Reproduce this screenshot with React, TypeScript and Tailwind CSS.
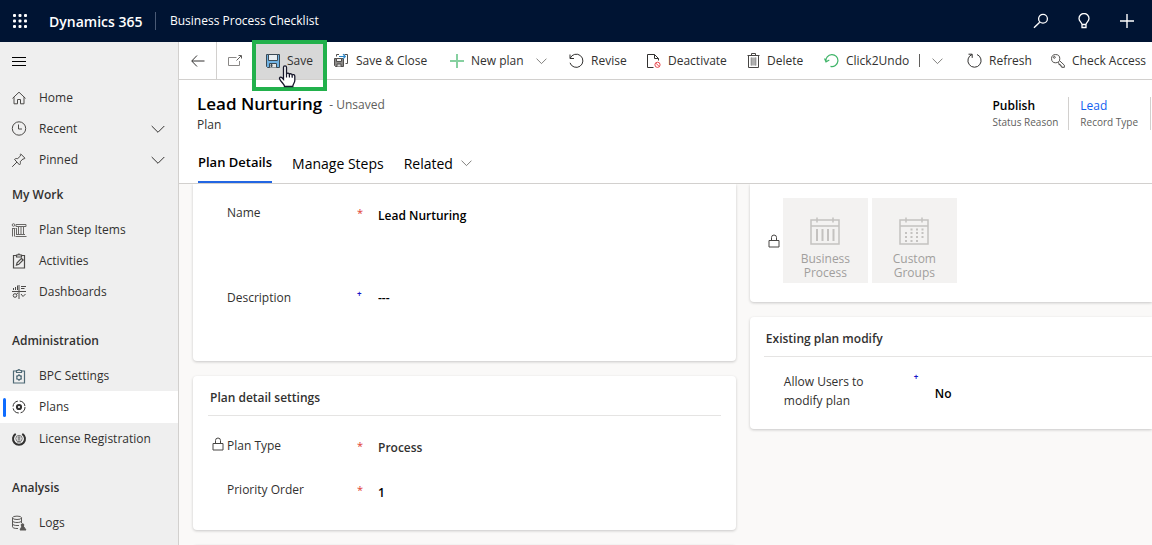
import React, { useState } from "react";

type IconProps = { children: React.ReactNode; className?: string; box?: string };

function Icon({ children, className = "size-4", box = "0 0 16 16" }: IconProps) {
  return (
    <svg viewBox={box} fill="none" stroke="currentColor" strokeWidth="1" aria-hidden="true" className={`shrink-0 ${className}`}>
      {children}
    </svg>
  );
}

const Chevron = ({ className = "h-3 w-[14px]" }: { className?: string }) => (
  <Icon box="0 0 14 12" className={className}>
    <path d="M.7 3 7 9.3 13.3 3" />
  </Icon>
);

const Lock = ({ className = "" }: { className?: string }) => (
  <Icon box="0 0 12 14" className={`h-[14px] w-3 text-[#484644] ${className}`}>
    <path d="M1 6.5h10v6.500H1zM3.500 6.500V3.500a2.500 2.500 0 0 1 5 0v3" />
  </Icon>
);

const navIcon = "size-4 text-[#4c4a48]";

const HomeIcon = () => (
  <Icon className={navIcon}>
    <path d="M1.500 8.400 8 2.200l6.500 6.200M3 7.200v6.600h3.500V9.500h3v4.300H13V7.200" />
  </Icon>
);
const ClockIcon = () => (
  <Icon className={navIcon}>
    <circle cx="8" cy="7.500" r="6.700" />
    <path d="M7.500 3.500v4.500H11" />
  </Icon>
);
const PinIcon = () => (
  <Icon className={navIcon}>
    <path d="m9.800 2 4.200 4.200-.8.800-1.200-.1-2.800 2.800c.5 1.400.1 2.500-.7 3.200L3.500 7.400c.8-.8 2-1.100 3.200-.8L9.500 3.900 9.200 2.600zM6 10l-4.800 4.800" />
  </Icon>
);
const StepItemsIcon = () => (
  <Icon className="size-4 text-[#6a6866]">
    <circle cx="2.500" cy="3" r="1.300" />
    <path d="M5 2.500h10v2H5zM1 6.500h3.500M1.500 6v8.500M3.500 6v8.500M7.500 5v7M10 5v7M12.500 5v7M6 12.500h8M4.500 14.500h11M5.500 6v7" />
  </Icon>
);
const ActivitiesIcon = () => (
  <Icon className={navIcon}>
    <path d="M5.500 2.500h-3v12.500h11V2.500h-3M5.500 4V2H7a1 1 0 0 1 2 0h1.500v2zM5.500 12l.6-2.300 4.400-4.300 1.600 1.600-4.300 4.300z" strokeWidth="1.200" />
  </Icon>
);
const DashboardIcon = () => (
  <Icon className={navIcon}>
    <path d="M1 7.500h14M8 1v14M2.500 6V4M4.500 6V3M6.500 6V1.500M10 2.500h5M10 4.500h3.500" />
    <circle cx="4" cy="11.500" r="1.800" />
    <path d="M5.500 10 7 9M10 10l2 2.500L14.500 10" />
  </Icon>
);
const SettingsIcon = () => (
  <Icon className="size-4 text-[#4f6a76]">
    <path d="M5.500 3h-3v12h11V3h-3M5.500 4.500v-2H7a1 1 0 0 1 2 0h1.500v2z" strokeWidth="1.200" />
    <circle cx="8" cy="9.500" r="2.200" strokeWidth="1.200" />
    <path d="M8 6v1.200M8 11.800V13M5 7.800l1 .6M10 10.600l1 .6M5 11.200l1-.6M10 8.400l1-.6" />
  </Icon>
);
const PlansIcon = () => (
  <Icon>
    <circle cx="8" cy="8" r="2.100" strokeWidth="2" />
    <circle cx="8" cy="8" r="6" strokeDasharray="7.500 1.925" />
  </Icon>
);
const LicenseIcon = () => (
  <Icon>
    <path d="M4.700 2.800a6 6 0 1 0 6.600 0" strokeWidth="2" />
    <circle cx="8" cy="7.500" r="3.200" stroke="#777" />
    <path d="M6.500 6.200h3M6.500 8h3M7 10v2M9 10v2M8 5v5" stroke="#777" />
  </Icon>
);
const LogsIcon = () => (
  <Icon className="size-4 text-[#5a5856]">
    <ellipse cx="6" cy="2.800" rx="4.500" ry="1.700" />
    <path d="M1.500 2.800v9c0 1 2 1.700 4.500 1.700h1M10.500 2.800V8M1.500 5.800c0 1 2 1.700 4.500 1.700s4.500-.7 4.500-1.700M1.500 8.800c0 1 2 1.700 4.500 1.700h2" />
    <path d="M11.500 10 9 15h6z" fill="currentColor" />
    <circle cx="11.500" cy="10" r="1.300" fill="currentColor" />
  </Icon>
);

type NavItem = { label: string; icon: React.ReactNode; expandable?: boolean };

const groups: { title?: string; items: NavItem[] }[] = [
  {
    items: [
      { label: "Home", icon: <HomeIcon /> },
      { label: "Recent", icon: <ClockIcon />, expandable: true },
      { label: "Pinned", icon: <PinIcon />, expandable: true },
    ],
  },
  {
    title: "My Work",
    items: [
      { label: "Plan Step Items", icon: <StepItemsIcon /> },
      { label: "Activities", icon: <ActivitiesIcon /> },
      { label: "Dashboards", icon: <DashboardIcon /> },
    ],
  },
  {
    title: "Administration",
    items: [
      { label: "BPC Settings", icon: <SettingsIcon /> },
      { label: "Plans", icon: <PlansIcon /> },
      { label: "License Registration", icon: <LicenseIcon /> },
    ],
  },
  { title: "Analysis", items: [{ label: "Logs", icon: <LogsIcon /> }] },
];

function Sidebar() {
  return (
    <nav aria-label="Site map" className="w-[179px] shrink-0 overflow-hidden border-r border-[#d2d0ce] bg-[#efefef] text-[#323130]">
      <button type="button" aria-label="Collapse site map" className="flex h-10 items-center px-3">
        <Icon className="h-3 w-[14px] text-black" box="0 0 14 12">
          <path d="M0 1.500h14M0 5.500h14M0 9.500h14" />
        </Icon>
      </button>
      <div className="flex flex-col gap-[14px]">
        {groups.map((group, i) => (
          <section key={group.title ?? "top"} className={i === 1 ? "-mt-[14px]" : ""}>
            {group.title && <h2 className="flex h-[39px] items-center px-3 font-semibold">{group.title}</h2>}
            <ul>
              {group.items.map((item) => {
                const active = item.label === "Plans";
                return (
                  <li key={item.label}>
                    <a
                      href="#"
                      aria-current={active ? "page" : undefined}
                      className={`relative flex items-center pr-[13px] pl-[11px] ${active ? "h-8 bg-white" : "h-[31px]"}`}
                    >
                      {active && <span className="absolute top-[7px] left-[3px] h-[19px] w-[3px] rounded-full bg-[#0f6cff]" />}
                      {item.icon}
                      <span className="ml-3 flex-1 whitespace-nowrap">{item.label}</span>
                      {item.expandable && <Chevron />}
                    </a>
                  </li>
                );
              })}
            </ul>
          </section>
        ))}
      </div>
    </nav>
  );
}

function Command({ label, icon, width }: { label: string; icon: React.ReactNode; width: string }) {
  return (
    <button type="button" className={`flex h-full shrink-0 items-center gap-[7px] whitespace-nowrap ${width}`}>
      {icon}
      {label}
    </button>
  );
}

function CommandBar() {
  return (
    <div role="toolbar" aria-label="Commands" className="flex h-[38px] shrink-0 items-center border-b border-[#d2d0ce] text-[#323130]">
      <button type="button" aria-label="Back" className="flex h-full w-[38px] shrink-0 items-center justify-center border-r border-[#d2d0ce]">
        <Icon className="size-[14px]" box="0 0 14 14">
          <path d="M13.500 7H1M6 1.500.7 7 6 12.500" />
        </Icon>
      </button>
      <button type="button" aria-label="Open in new window" className="flex h-full w-[39px] shrink-0 items-center pl-[10px]">
        <Icon className="size-4 text-[#8a8886]">
          <path d="M9.500 4.500h-8v8h11V8" />
          <path d="M9.500 7.500 14 3M11.500 2.500h3v3" stroke="#605e5c" />
        </Icon>
      </button>
      <div className="relative mr-[7px] h-full w-[67px] shrink-0">
        <button type="button" className="flex h-full w-full items-center gap-[7px] bg-[#d8d8d8] pl-[10px]">
          <Icon className="size-[14px] text-[#3b4a55]" box="0 0 14 14">
            <path d="M.5.500h13v13h-12l-1-1z" fill="#6fb1e2" />
            <path d="M2.500.500h9v6h-9z" fill="#e8eef2" />
            <path d="M3.500 13.500v-4h7v4" fill="#e4e4e4" />
            <path d="M5 10.500h1v2H5z" fill="currentColor" />
          </Icon>
          Save
        </button>
        <span className="pointer-events-none absolute -top-[2px] -right-1 -left-1 h-[51px] border-4 border-[#22b14c]" />
        <svg viewBox="0 0 18 24" aria-hidden="true" className="pointer-events-none absolute top-[23px] left-[22px] h-6 w-[18px]">
          <path
            d="M5.500 2.200C5.500.4 8.500.4 8.500 2.200v7c.3-1.400 2.700-1.300 2.900.3.500-1.200 2.600-.9 2.800.6.700-.9 2.600-.5 2.600 1.200v4.200c0 2.500-2 3.500-2 6H6.500c0-2-2.500-3.500-4.700-7.200-1-1.700.8-2.900 2.200-1.600l1.500 1.600z"
            fill="#fff"
            stroke="#16162a"
            strokeWidth="1.300"
          />
          <path d="M8.500 9v3.500M11.400 9.500v3M14.200 10.500v2.300" fill="none" stroke="#16162a" strokeWidth="1.200" />
        </svg>
      </div>
      <div className="flex h-full items-center pl-1">
        <Command
          label="Save & Close"
          width="w-[116px]"
          icon={
            <Icon className="size-[15px] text-[#504e4c]" box="0 0 15 15">
              <path d="M.5 5.500h9v8h-8l-1-1z" fill="#8a8886" />
              <path d="M2.500 5.500h5v3h-5z" fill="#eee" />
              <path d="M3 13.500v-2.500h4v2.500" fill="#ddd" />
              <path d="M2.500 3.500v-2H5M10.500 1.500h3v9h-2" />
              <path d="M5 3.500h6M9 1.200l2.300 2.300L9 5.800" stroke="#2b86c8" strokeWidth="1.200" />
            </Icon>
          }
        />
        <Command
          label="New plan"
          width="w-[86px]"
          icon={
            <Icon className="size-[14px] text-[#86d0a0]" box="0 0 14 14">
              <path d="M7 0v14M0 7h14" strokeWidth="2" />
            </Icon>
          }
        />
        <button type="button" aria-label="More new options" className="flex h-full w-[33px] shrink-0 items-center text-[#605e5c]">
          <Chevron className="h-3 w-[11px]" />
        </button>
        <Command
          label="Revise"
          width="w-[78px]"
          icon={
            <Icon className="size-[15px]" box="0 0 15 15">
              <path d="M1 1.500v4h4M1.200 5.200a6.600 6.600 0 1 1-.2 4.600" />
            </Icon>
          }
        />
        <Command
          label="Deactivate"
          width="w-[100px]"
          icon={
            <Icon className="size-[14px]" box="0 0 14 14">
              <path d="M6.500 13.500h-6V.500h7l4 4v2M7.500.500v4h4" />
              <circle cx="10.500" cy="10.800" r="2.600" stroke="#e8474d" />
              <path d="m8.800 9.100 3.400 3.400" stroke="#e8474d" />
            </Icon>
          }
        />
        <Command
          label="Delete"
          width="w-[77px]"
          icon={
            <Icon className="h-[15px] w-[13px] text-[#484644]" box="0 0 13 15">
              <path d="M.5 2.500h12M4.500 2.500v-2h4v2M1.500 2.500v12h10v-12" />
              <path d="M3.500 4.500h6v8h-6z" fill="#b0b0b0" stroke="none" />
              <path d="M4.500 4.500v8M8.500 4.500v8" stroke="#999" />
            </Icon>
          }
        />
        <Command
          label="Click2Undo"
          width="w-[95px]"
          icon={
            <Icon className="size-[15px] text-[#3fb468]" box="0 0 15 15">
              <path d="M.5 5.500 2 8.800 5.300 7M2 8.600A6 6 0 1 1 6.500 13.400" strokeWidth="1.200" />
            </Icon>
          }
        />
        <span className="h-[13px] w-px shrink-0 bg-[#605e5c]" />
        <button type="button" aria-label="More undo options" className="ml-3 flex h-full w-[35px] shrink-0 items-center text-[#605e5c]">
          <Chevron className="h-3 w-[11px]" />
        </button>
        <Command
          label="Refresh"
          width="w-[84px]"
          icon={
            <Icon className="size-[15px]" box="0 0 15 15">
              <path d="M1.500 1.200h3.700v3.700M5 1.500A6.600 6.600 0 1 0 10 1.500" />
            </Icon>
          }
        />
        <Command
          label="Check Access"
          width=""
          icon={
            <Icon className="size-[14px] text-[#484644]" box="0 0 15 15">
              <circle cx="5" cy="5" r="4.400" />
              <circle cx="3.600" cy="3.600" r="1" />
              <path d="m9 7 5.300 5v2.300h-2.800v-1.500H10v-1.500H8.500V9.800L7.300 8.800" />
            </Icon>
          }
        />
      </div>
    </div>
  );
}

function RecordHeader() {
  return (
    <header className="shrink-0 border-b border-[#d2d0ce] px-[18px] pr-px">
      <div className="flex items-start justify-between pt-3">
        <div>
          <div className="flex items-center gap-[7px]">
            <h1 className="text-[17px] leading-6 font-semibold text-black">Lead Nurturing</h1>
            <span className="pt-px text-[#605e5c]">- Unsaved</span>
          </div>
          <p className="leading-[18px]">Plan</p>
        </div>
        <dl className="mt-[5px] flex">
          <div className="flex flex-col-reverse border-r border-[#d2d0ce] pr-[10px]">
            <dt className="text-[10px] leading-4 text-[#605e5c]">Status Reason</dt>
            <dd className="leading-[17px] font-semibold text-black">Publish</dd>
          </div>
          <div className="flex flex-col-reverse border-r border-[#d2d0ce] pr-3 pl-[11px]">
            <dt className="text-[10px] leading-4 text-[#605e5c]">Record Type</dt>
            <dd className="leading-[17px] font-medium">
              <a href="#" className="text-[#1160f0]">Lead</a>
            </dd>
          </div>
        </dl>
      </div>
      <div role="tablist" className="mt-[15px] flex gap-5 pl-px text-[14px] text-black">
        <button type="button" role="tab" aria-selected="true" className="h-[34px] border-b-2 border-[#2266e3] pb-1 text-[13px] font-semibold">
          Plan Details
        </button>
        <button type="button" role="tab" aria-selected="false" className="h-[34px] pb-[6px]">
          Manage Steps
        </button>
        <button type="button" role="tab" aria-selected="false" className="flex h-[34px] items-center gap-2 pb-[6px]">
          Related
          <Chevron className="h-3 w-[11px] text-[#605e5c]" />
        </button>
      </div>
    </header>
  );
}

const cardShadow = "shadow-[0_1px_3px_rgba(0,0,0,0.2)]";
const value = "min-w-0 flex-1 appearance-none bg-transparent font-semibold text-black opacity-100 outline-none";

function Required() {
  return <span className="w-[21px] shrink-0 self-start text-[11px] leading-[18px] text-[#e03a2f]">*</span>;
}
function Recommended() {
  return <span className="w-[21px] shrink-0 self-start text-[8px] leading-[10px] font-bold text-[#1414c8]">+</span>;
}

function TileIcon({ dots = false }: { dots?: boolean }) {
  return (
    <svg viewBox="0 0 30 28" fill="none" stroke="#c4c2c0" strokeWidth="1.500" aria-hidden="true" className="h-7 w-[30px]">
      <path d="M1 3h28v24H1zM1 9h28M7 .5v5M23 .5v5" />
      {dots ? (
        <path d="M11.500 12.500h14M6 16h20M6 20h20M6 24h14" strokeWidth="2" strokeDasharray="2 3.500" />
      ) : (
        <path d="M7 12v12M12.500 12v12M18 12v12M23.500 12v12" strokeWidth="2" />
      )}
    </svg>
  );
}

function Tile({ first, second, dots }: { first: string; second: string; dots?: boolean }) {
  return (
    <button type="button" disabled className="flex size-[85px] flex-col items-center bg-[#f3f2f1] pt-[19px] leading-[14px] text-[#a19f9d]">
      <TileIcon dots={dots} />
      <span className="mt-[7px] text-center">
        {first}
        <br />
        {second}
      </span>
    </button>
  );
}

export default function App() {
  const [name, setName] = useState("Lead Nurturing");
  const [description, setDescription] = useState("---");
  const [order, setOrder] = useState("1");

  return (
    <div className="flex h-screen flex-col overflow-hidden bg-white font-['Open_Sans','Noto_Sans',sans-serif] text-[12px] text-[#323130]">
      <header className="flex h-[42px] shrink-0 items-center bg-[#001433] text-white">
        <button type="button" aria-label="App launcher" className="ml-3 flex size-4 items-center justify-center">
          <svg viewBox="0 0 14 14" fill="currentColor" aria-hidden="true" className="size-[14px]">
            {[0, 5.5, 11].map((y) => [0, 5.5, 11].map((x) => <rect key={`${x}-${y}`} x={x} y={y} width="3" height="3" rx="1" />))}
          </svg>
        </button>
        <a href="#" className="ml-[21px] w-[106px] text-[14px] font-semibold whitespace-nowrap">Dynamics 365</a>
        <span className="h-[18px] w-px bg-[#4a5a75]" />
        <a href="#" className="ml-[14px] whitespace-nowrap">Business Process Checklist</a>
        <div className="mr-[17px] ml-auto flex items-center gap-[27px]">
          <button type="button" aria-label="Search">
            <Icon>
              <circle cx="10" cy="5.700" r="4.400" strokeWidth="1.300" />
              <path d="M6.700 9.200 1 14.800" strokeWidth="1.400" />
            </Icon>
          </button>
          <button type="button" aria-label="Ideas">
            <Icon>
              <path d="M6 11.500c0-2-3-3-3-6a5 5 0 0 1 10 0c0 3-3 4-3 6zM6 11.500v3h4v-3" strokeWidth="1.300" />
            </Icon>
          </button>
          <button type="button" aria-label="Quick create">
            <Icon>
              <path d="M8 1v14M1 8h14" strokeWidth="1.400" />
            </Icon>
          </button>
        </div>
      </header>

      <div className="flex min-h-0 flex-1">
        <Sidebar />
        <div className="flex min-w-0 flex-1 flex-col">
          <CommandBar />
          <RecordHeader />
          <main className="grid min-h-0 flex-1 grid-cols-[27fr_20fr] items-start gap-[14px] overflow-hidden bg-[#faf9f8] pl-[14px]">
            <div className="flex min-w-0 flex-col gap-[15px]">
              <section className={`flex flex-col gap-[61px] rounded-b-[4px] bg-white pt-5 pr-4 pb-[48px] pl-[34px] ${cardShadow}`}>
                <div className="flex h-6 items-start">
                  <label htmlFor="name" className="w-[130px] shrink-0 leading-[18px]">Name</label>
                  <Required />
                  <input id="name" value={name} onChange={(e) => setName(e.target.value)} className={`${value} pt-[3px] leading-[18px]`} />
                </div>
                <div className="flex h-6 items-start">
                  <label htmlFor="description" className="w-[130px] shrink-0 leading-[18px]">Description</label>
                  <Recommended />
                  <input id="description" value={description} onChange={(e) => setDescription(e.target.value)} className={`${value} leading-[18px]`} />
                </div>
              </section>

              <section className={`rounded-[4px] bg-white px-[15px] pb-[25px] ${cardShadow}`}>
                <h2 className="h-10 border-b border-[#e5e4e3] px-[2px] pt-[13px] leading-[18px] font-semibold">Plan detail settings</h2>
                <div className="mt-[21px] flex flex-col gap-5 pl-1">
                  <div className="flex h-6 items-start">
                    <span className="w-[15px] shrink-0"><Lock /></span>
                    <label htmlFor="plan-type" className="w-[130px] shrink-0 leading-[18px]">Plan Type</label>
                    <Required />
                    <select id="plan-type" disabled className={`${value} pt-[2px] leading-[18px] text-[#323130]!`}>
                      <option>Process</option>
                    </select>
                  </div>
                  <div className="flex h-6 items-start pl-[15px]">
                    <label htmlFor="order" className="w-[130px] shrink-0 leading-[18px]">Priority Order</label>
                    <Required />
                    <input id="order" value={order} onChange={(e) => setOrder(e.target.value)} className={`${value} pt-[3px] leading-[18px]`} />
                  </div>
                </div>
              </section>

              <section className={`h-20 rounded-[4px] bg-white ${cardShadow}`} />
            </div>

            <div className="flex min-w-0 flex-col gap-[15px]">
              <section className={`flex items-center rounded-bl-[4px] bg-white pt-[14px] pb-[19px] pl-[18px] ${cardShadow}`}>
                <Lock className="mr-[3px]" />
                <div className="flex gap-1">
                  <Tile first="Business" second="Process" />
                  <Tile first="Custom" second="Groups" dots />
                </div>
              </section>

              <section className={`rounded-l-[4px] bg-white pb-[19px] pl-[14px] ${cardShadow}`}>
                <h2 className="h-10 border-b border-[#e5e4e3] px-[2px] pt-[13px] leading-[18px] font-semibold">Existing plan modify</h2>
                <div className="mt-[15px] flex items-center pl-5">
                  <label htmlFor="allow" className="w-[130px] shrink-0 pr-6 leading-[19px]">Allow Users to modify plan</label>
                  <Recommended />
                  <select id="allow" className={`${value} pt-[6px] leading-[18px]`}>
                    <option>No</option>
                  </select>
                </div>
              </section>
            </div>
          </main>
        </div>
      </div>
    </div>
  );
}
